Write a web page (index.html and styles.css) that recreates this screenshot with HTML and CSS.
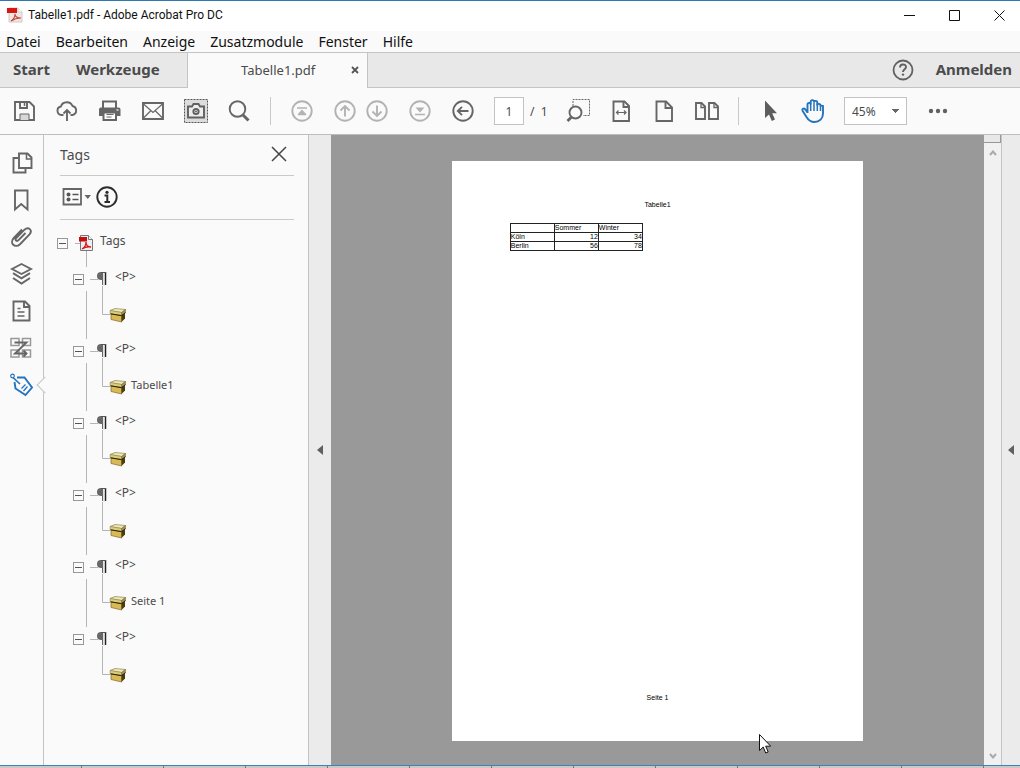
FILE: index.html
```html
<!DOCTYPE html>
<html lang="de">
<head>
<meta charset="utf-8">
<title>Tabelle1.pdf - Adobe Acrobat Pro DC</title>
<link rel="stylesheet" href="styles.css">
</head>
<body>
<svg class="defs" aria-hidden="true">
  <symbol id="pdf" viewBox="0 0 15 16">
    <path d="M1.500 .5h8l4 4v11h-12z" fill="#f1eeee" stroke="#777"/>
    <path d="M9.500 .5v4h4" fill="#fff" stroke="#777"/>
    <path d="M0 2h8v4.500H0z" fill="#c80d10"/>
    <path d="M3 14c2-1 4-4 4-7 0 3 2 5 5 5-3-.5-6 0-9 2z" fill="none" stroke="#d3191b" stroke-width="1.300"/>
  </symbol>
  <symbol id="branch" viewBox="0 0 26 36">
    <path d="M2.500 0v9M2.500 33v3" fill="none" stroke="#b4b4b4"/>
    <use href="#pilcrow" width="26" height="36"/>
  </symbol>
  <symbol id="branch-end" viewBox="0 0 26 36">
    <path d="M2.500 0v9" fill="none" stroke="#b4b4b4"/>
    <use href="#pilcrow" width="26" height="36"/>
  </symbol>
  <symbol id="pilcrow" viewBox="0 0 26 36">
    <path d="M6 21.500h8M18.500 28v8" fill="none" stroke="#b4b4b4"/>
    <path d="M18 14h-1a4 4 0 0 0 0 8h1z" fill="#686868"/>
    <path d="M18.500 14v13" stroke="#666" stroke-width="1"/>
    <path d="M21.500 14v13" stroke="#222" stroke-width="1.500"/>
    <path d="M17 14.500h5" stroke="#555"/>
    <path d="M20 15.500v12" stroke="#ccc"/>
  </symbol>
  <symbol id="box" viewBox="0 0 18 16">
    <path d="M1 3.500L6 1.500l10.500 1-4 3z" fill="#efe8b4" stroke="#8f8350" stroke-width=".7"/>
    <path d="M1 3.500l11.500 2v3L1 6.500z" fill="#d9cd84" stroke="#8a7a3a" stroke-width=".5"/>
    <path d="M12.500 5.500l4-3v3l-4 3z" fill="#a3954f" stroke="#6b5c28" stroke-width=".5"/>
    <path d="M2 7l10.500 1.500v6.500L2 12.500z" fill="#d8b953" stroke="#6e5617" stroke-width=".6"/>
    <path d="M12.500 8.500L16 6v5.500L12.500 15z" fill="#4f3c0e"/>
    <path d="M1.500 6.800l11 1.900 4-3" fill="none" stroke="#2d230a"/>
  </symbol>
  <symbol id="leaf" viewBox="0 0 44 36">
    <path d="M2.500 0v36M18.500 0v20.500H26" fill="none" stroke="#b4b4b4"/>
    <use href="#box" x="25" y="13" width="18" height="16"/>
  </symbol>
  <symbol id="leaf-end" viewBox="0 0 44 36">
    <path d="M18.500 0v20.500H26" fill="none" stroke="#b4b4b4"/>
    <use href="#box" x="25" y="13" width="18" height="16"/>
  </symbol>
</svg>

<header class="titlebar">
  <svg class="app-icon" viewBox="0 0 16 16"><path d="M2 1h9l4 4v10H2z" fill="#eee6e4" stroke="#d3cac8"/><path d="M11 1v4h4" fill="#fff" stroke="#d3cac8"/><path d="M0 1h10v5H0z" fill="#d5170f"/><path d="M4 14c3-2 4-4 4-7 0 3 3 4 6 4-4 0-7 1-10 3z" fill="none" stroke="#c8483f" stroke-width="1.200"/></svg>
  <h1 class="window-title">Tabelle1.pdf - Adobe Acrobat Pro DC</h1>
  <div class="window-controls">
    <button class="window-button" aria-label="Minimieren"><svg viewBox="0 0 11 11"><path d="M0 5.500h11"/></svg></button>
    <button class="window-button" aria-label="Maximieren"><svg viewBox="0 0 11 11"><path d="M.5 .5h10v10H.5z"/></svg></button>
    <button class="window-button" aria-label="Schließen"><svg viewBox="0 0 11 11"><path d="M.5 .5l10 10M10.500 .5l-10 10"/></svg></button>
  </div>
</header>

<nav class="menubar" aria-label="Menü">
  <button class="menu">Datei</button>
  <button class="menu">Bearbeiten</button>
  <button class="menu">Anzeige</button>
  <button class="menu">Zusatzmodule</button>
  <button class="menu">Fenster</button>
  <button class="menu">Hilfe</button>
</nav>

<div class="tabbar">
  <button class="tab-link tab-start">Start</button>
  <button class="tab-link tab-tools">Werkzeuge</button>
  <div class="doc-tab">
    <button class="doc-tab-name">Tabelle1.pdf</button>
    <button class="doc-tab-close" aria-label="Tab schließen"><svg viewBox="0 0 8 8"><path d="M1 1l6 6M7 1L1 7" stroke="#555" stroke-width="1.800"/></svg></button>
  </div>
  <div class="account">
    <button class="icon-button" aria-label="Hilfe"><svg viewBox="0 0 24 24"><circle cx="12" cy="12" r="9.500" fill="none" stroke="#616161" stroke-width="1.800"/><path d="M9 9.500c0-4 6-4 6-.5 0 2.200-3 2.500-3 5" fill="none" stroke="#616161" stroke-width="1.900"/><circle cx="12" cy="16.600" r="1.200" fill="#616161"/></svg></button>
    <button class="tab-link tab-login">Anmelden</button>
  </div>
</div>

<div class="toolbar">
  <button class="icon-button" aria-label="Speichern"><svg viewBox="0 0 24 24" class="line"><path d="M3 3h14.500l4.500 4.500V21H3z"/><path d="M8 3v6h7V3"/><path d="M8 21v-6h9v6" fill="#d8d8d8" stroke-width="1"/><path d="M12.500 4v3" stroke-width="1.500"/></svg></button>
  <button class="icon-button" aria-label="Hochladen"><svg viewBox="0 0 24 24" class="line"><path d="M8.500 16H6.500a4.300 4.300 0 0 1-.6-8.500A6.200 6.200 0 0 1 17.500 7a4.600 4.600 0 0 1 0 9h-2"/><path d="M12 22V11M8.500 14.500L12 11l3.500 3.500"/></svg></button>
  <button class="icon-button" aria-label="Drucken"><svg viewBox="0 0 24 24"><path d="M5 9V2.500h13V9" fill="none" stroke="#666" stroke-width="2"/><path d="M2.500 8.500h18a2 2 0 0 1 2 2V17H1v-6.500a2 2 0 0 1 1.500-2z" fill="#666"/><path d="M5.500 13.500h12.500v7.500H5.500z" fill="#fff" stroke="#666" stroke-width="2"/><path d="M8.500 15.500h7M8.500 18h5" stroke="#666"/><path d="M18.500 11h2" stroke="#fff" stroke-width="1.200"/></svg></button>
  <button class="icon-button" aria-label="E-Mail"><svg viewBox="0 0 24 24" class="line"><path d="M2 4h20v16H2z"/><path d="M2 4.500l10 9 10-9M2 19.500l8-8M22 19.500l-8-8" stroke-width="1.200"/></svg></button>
  <button class="icon-button" aria-label="Schnappschuss"><svg viewBox="0 0 24 24"><path d="M.5 .5h23v23H.5z" fill="#ddd" stroke="#555" stroke-dasharray="2 1"/><path d="M4 7.500h4L9.500 5h5L16 7.500h4v11H4z" fill="#eee" stroke="#616161" stroke-width="1.900"/><circle cx="12" cy="12.500" r="2.600" fill="#fff" stroke="#616161" stroke-width="2"/><circle cx="12" cy="12.500" r="1" fill="#616161"/></svg></button>
  <button class="icon-button" aria-label="Suchen"><svg viewBox="0 0 24 24" class="line"><circle cx="10.500" cy="10" r="7.800"/><path d="M16 16l5.500 5.500" stroke-width="3"/></svg></button>
  <span class="divider"></span>
  <button class="icon-button" aria-label="Erste Seite" disabled><svg viewBox="0 0 24 24" class="line pale"><circle cx="12" cy="12" r="9.700"/><path d="M7 9h10M8 15.500h8" stroke-width="1.500"/><path d="M12 10.500l4.500 5h-9z" class="solid"/></svg></button>
  <button class="icon-button" aria-label="Vorherige Seite" disabled><svg viewBox="0 0 24 24" class="line pale"><circle cx="12" cy="12" r="9.700"/><path d="M12 17.500V7M7.500 11.500L12 7l4.500 4.500"/></svg></button>
  <button class="icon-button next-page" aria-label="Nächste Seite" disabled><svg viewBox="0 0 24 24" class="line pale"><circle cx="12" cy="12" r="9.700"/><path d="M12 6.500V17M7.500 12.500L12 17l4.500-4.500"/></svg></button>
  <button class="icon-button" aria-label="Letzte Seite" disabled><svg viewBox="0 0 24 24" class="line pale"><circle cx="12" cy="12" r="9.700"/><path d="M7 15.500h10" stroke-width="1.500"/><path d="M12 13.500L7.500 8.500h9z" class="solid"/></svg></button>
  <button class="icon-button" aria-label="Vorherige Ansicht"><svg viewBox="0 0 24 24" class="line"><circle cx="12" cy="12" r="9.700"/><path d="M17.500 12H7M11 7.800L6.800 12l4.200 4.200"/></svg></button>
  <input class="page-input" aria-label="Seitenzahl" value="1">
  <span class="page-total">/&nbsp; 1</span>
  <button class="icon-button" aria-label="Auswahlzoom"><svg viewBox="0 0 24 24" class="line"><path d="M7 7V.5h16.500v16H17" stroke-width="1" stroke-dasharray="2 1"/><circle cx="9.500" cy="13.500" r="6"/><path d="M5.500 18L1.500 22" stroke-width="2.800"/></svg></button>
  <button class="icon-button" aria-label="Seitenbreite"><svg viewBox="0 0 24 24" class="line"><path d="M4.500 2.500h11l4.500 4.500v15H4.500z"/><path d="M14.500 3v5H20" /><path d="M8 13.500h9M9.500 11.500l-2 2 2 2M15 11.500l2 2-2 2" stroke-width="1.200"/></svg></button>
  <button class="icon-button" aria-label="Ganze Seite"><svg viewBox="0 0 24 24" class="line"><path d="M4.500 2.500h9.500l6 6V22H4.500z"/><path d="M13.500 3v6H20"/></svg></button>
  <button class="icon-button" aria-label="Doppelseite"><svg viewBox="0 0 24 24" class="line"><path d="M1 4h5.500L10 7.500v12.500H1zM14 4h5.500L23 7.500v12.500h-9z"/><path d="M6 4.500v4h4M19 4.500v4h4" stroke-width="1.300"/></svg></button>
  <span class="divider"></span>
  <button class="icon-button" aria-label="Auswahl"><svg viewBox="0 0 24 24"><path d="M7 1.500v17.500l4-3.500 2.800 6.500 3.200-1.500-2.800-6.200H19z" fill="#5d5d5d"/></svg></button>
  <button class="icon-button" aria-label="Hand"><svg viewBox="0 0 24 24" class="line blue"><path d="M6.500 14V5.500a1.600 1.600 0 0 1 3.200 0V2.800a1.600 1.600 0 0 1 3.300 0v.7a1.600 1.600 0 0 1 3.300 0v3a1.600 1.600 0 0 1 3.200 0L22 7v7.500c0 5-3.500 8.500-8.500 8.500-4 0-6-1.500-8-5L1.700 12c-1-2 1-3.200 2.400-1.800L6.500 13.500"/><path d="M9.700 4.500V12M13 3.500V12M16.300 4.500V12M19.500 7v5" stroke-width="1.500"/></svg></button>
  <select class="zoom" aria-label="Zoom"><option>45%</option></select>
  <button class="icon-button" aria-label="Mehr"><svg viewBox="0 0 24 24"><g fill="#616161"><circle cx="5" cy="12" r="2.200"/><circle cx="12" cy="12" r="2.200"/><circle cx="19" cy="12" r="2.200"/></g></svg></button>
</div>

<div class="workspace">
  <nav class="rail" aria-label="Navigationsfenster">
    <button class="icon-button" aria-label="Seitenminiaturen"><svg viewBox="0 0 24 24" class="line"><path d="M9 2.500h8.500l4 4V17H9z"/><path d="M16.500 3v5h5" stroke-width="1.500"/><path d="M8.500 7H3.500v14.500h12V18"/></svg></button>
    <button class="icon-button" aria-label="Lesezeichen"><svg viewBox="0 0 24 24" class="line"><path d="M5 2.500h12.500v19L11.200 16 5 21.500z"/></svg></button>
    <button class="icon-button" aria-label="Anlagen"><svg viewBox="0 0 24 24" class="line"><path d="M15.500 8l-7 7.200c-1.800 1.800-4-.3-2.300-2.200l8.300-8.300c4-3.700 8.500.5 5 4.700l-9.500 9.800c-5 4.700-11-1.200-6.200-6.200L12 4.500"/></svg></button>
    <button class="icon-button" aria-label="Ebenen"><svg viewBox="0 0 24 24" class="line"><path d="M11.500 2l9.500 5-9.500 5L2 7z"/><path d="M3 11.200l8.500 5.200 8.500-5.200M3 16l8.500 5.500L20 16" stroke-width="2"/></svg></button>
    <button class="icon-button" aria-label="Inhalt"><svg viewBox="0 0 24 24" class="line"><path d="M3.500 2.500H15l4.500 4.500v14.500h-16z"/><path d="M14 3v5h5.500"/><path d="M7.500 9.500h3M7.500 13h7M7.500 17h7" stroke-width="1.500"/></svg></button>
    <button class="icon-button" aria-label="Lesereihenfolge"><svg viewBox="0 0 24 24" class="line"><path d="M1 2.500h8v7H1zM12.500 2.500h8v7h-8zM1 14h8v7H1zM12.500 14h8v7h-8z" stroke="#999" stroke-width="1.500"/><path d="M4.500 6.500h12L5 17.500h11M13.500 14.500l3 3-3 3"/></svg></button>
    <button class="icon-button rail-active" aria-label="Tags"><svg viewBox="0 0 24 24" class="line blue"><path d="M7 4.500h7.500L22 14.500l-6.500 7.500-10-6.500L4.500 9"/><path d="M3 4.500L10 11" stroke-width="1.700"/><circle cx="2.500" cy="3" r="1.800" stroke-width="1.200"/><path d="M11.500 15.500l4-4M13.500 18l4-4.500" stroke-width="1.300"/></svg></button>
  </nav>

  <aside class="panel">
    <div class="panel-head">
      <h2 class="panel-title">Tags</h2>
      <button class="panel-close" aria-label="Schließen"><svg viewBox="0 0 16 16"><path d="M1 1l14 14M15 1L1 15" stroke="#444" stroke-width="1.500"/></svg></button>
    </div>
    <div class="panel-tools">
      <button class="options" aria-label="Optionen"><svg viewBox="0 0 30 20"><path d="M3 2h17.500v15.500H3z" fill="none" stroke="#666" stroke-width="1.800"/><circle cx="8" cy="7.500" r="2" fill="#555"/><circle cx="8" cy="12.500" r="2" fill="#555"/><path d="M12 7.500h6M12 12.500h6" stroke="#555" stroke-width="1.600"/><path d="M24 8h6.500l-3.200 4z" fill="#666"/></svg></button>
      <button class="icon-button" aria-label="Info"><svg viewBox="0 0 24 24"><circle cx="12" cy="12" r="9.700" fill="none" stroke="#2d2d2d" stroke-width="1.900"/><circle cx="12" cy="7.300" r="1.600" fill="#2d2d2d"/><path d="M9.500 10.500h2.800v6.500M9.500 17h5.500" fill="none" stroke="#2d2d2d" stroke-width="2"/></svg></button>
    </div>
    <div class="tree">
      <div class="row"><button class="toggle" aria-label="Tags einklappen"></button><svg class="root-icon" viewBox="0 0 27 36"><path d="M7 21.500h5M18.500 29v7" stroke="#b4b4b4"/><use href="#pdf" x="11" y="13" width="15" height="16"/></svg><span class="label">Tags</span></div>
      <div class="row row-p"><button class="toggle" aria-label="P einklappen"></button><svg class="branch"><use href="#branch"/></svg><span class="label">&lt;P&gt;</span></div>
      <div class="row row-leaf"><svg class="leaf"><use href="#leaf"/></svg></div>
      <div class="row row-p"><button class="toggle" aria-label="P einklappen"></button><svg class="branch"><use href="#branch"/></svg><span class="label">&lt;P&gt;</span></div>
      <div class="row row-leaf"><svg class="leaf"><use href="#leaf"/></svg><span class="label leaf-label">Tabelle1</span></div>
      <div class="row row-p"><button class="toggle" aria-label="P einklappen"></button><svg class="branch"><use href="#branch"/></svg><span class="label">&lt;P&gt;</span></div>
      <div class="row row-leaf"><svg class="leaf"><use href="#leaf"/></svg></div>
      <div class="row row-p"><button class="toggle" aria-label="P einklappen"></button><svg class="branch"><use href="#branch"/></svg><span class="label">&lt;P&gt;</span></div>
      <div class="row row-leaf"><svg class="leaf"><use href="#leaf"/></svg></div>
      <div class="row row-p"><button class="toggle" aria-label="P einklappen"></button><svg class="branch"><use href="#branch"/></svg><span class="label">&lt;P&gt;</span></div>
      <div class="row row-leaf"><svg class="leaf"><use href="#leaf"/></svg><span class="label leaf-label">Seite 1</span></div>
      <div class="row row-p"><button class="toggle" aria-label="P einklappen"></button><svg class="branch"><use href="#branch-end"/></svg><span class="label">&lt;P&gt;</span></div>
      <div class="row row-leaf"><svg class="leaf"><use href="#leaf-end"/></svg></div>
    </div>
  </aside>

  <button class="collapse collapse-left" aria-label="Navigationsfenster ausblenden"><svg viewBox="0 0 6 10"><path d="M6 0v10L0 5z" fill="#606060"/></svg></button>

  <main class="viewer">
    <article class="sheet">
      <p class="sheet-head">Tabelle1</p>
      <table class="grid">
        <tr><td></td><td>Sommer</td><td>Winter</td></tr>
        <tr><td>Köln</td><td class="num">12</td><td class="num">34</td></tr>
        <tr><td>Berlin</td><td class="num">56</td><td class="num">78</td></tr>
      </table>
      <p class="sheet-foot">Seite 1</p>
      <svg class="cursor" viewBox="0 0 12 20"><path d="M.5 .5v16l3.700-3.500 2.500 6 2.500-1-2.500-5.800h5z" fill="#fff" stroke="#111"/></svg>
    </article>
  </main>

  <div class="scrollbar">
    <div class="splitter"></div>
    <button class="scroll-step" aria-label="Nach oben"><svg viewBox="0 0 8 6"><path d="M1 5l3-3.500L7 5"/></svg></button>
    <button class="scroll-step scroll-down" aria-label="Nach unten"><svg viewBox="0 0 8 6"><path d="M1 1l3 3.500L7 1"/></svg></button>
  </div>
  <button class="collapse collapse-right" aria-label="Werkzeuge einblenden"><svg viewBox="0 0 6 10"><path d="M6 0v10L0 5z" fill="#606060"/></svg></button>
</div>
<div class="desktop-edge"></div>
</body>
</html>
```
FILE: styles.css
```css
* { box-sizing: border-box; }
body {
  margin: 0;
  min-height: 100vh;
  display: flex;
  flex-direction: column;
  background: #fafafa;
  color: #4b4b4b;
  font-family: "Noto Sans", "Open Sans", sans-serif;
  font-size: 12px;
  border-top: 1px solid #2f77b0;
}
h1, h2, p { margin: 0; font-weight: 400; }
button {
  padding: 0;
  border: 0;
  background: none;
  color: inherit;
  font: inherit;
  white-space: nowrap;
}
svg { display: block; flex: none; }
.defs { position: absolute; width: 0; height: 0; }

.titlebar {
  display: flex;
  align-items: center;
  height: 30px;
  padding: 0 0 2px 7px;
  gap: 5px;
  background: #fff;
  color: #111;
}
.app-icon { width: 16px; height: 16px; }
.window-title { font-family: Roboto, "Noto Sans", sans-serif; font-size: 12px; }
.window-controls { display: flex; margin-left: auto; }
.window-button { display: grid; place-items: center; width: 45px; height: 28px; }
.window-button:last-child { margin-right: -2px; }
.window-button svg { width: 11px; height: 11px; fill: none; stroke: #111; }

.menubar {
  display: flex;
  height: 21px;
  padding-left: 6px;
  gap: 15px;
  color: #111;
  font-size: 14px;
  line-height: 21px;
}

.tabbar {
  display: flex;
  height: 36px;
  background: #e8e8e8;
  border-top: 1px solid #c4c4c4;
  border-bottom: 1px solid #c4c4c4;
}
.tab-link { padding-bottom: 2px; font-size: 15px; font-weight: 700; }
.tab-start { margin-left: 13px; }
.tab-tools { margin: 0 27px 0 26px; }
.doc-tab {
  display: flex;
  align-items: center;
  width: 181px;
  margin-bottom: -1px;
  padding-bottom: 2px;
  border: solid #c4c4c4;
  border-width: 0 1px;
  background: #fafafa;
}
.doc-tab-name { flex: 1; padding-left: 26px; font-size: 13px; }
.doc-tab-close { padding: 8px; }
.doc-tab-close svg { width: 8px; height: 8px; }
.account { display: flex; align-items: center; margin-left: auto; padding-right: 8px; gap: 21px; }

.icon-button { flex: none; width: 24px; height: 24px; }
.icon-button svg { width: 24px; height: 24px; }
.line { fill: none; stroke: #666; stroke-width: 1.9; }
.pale { stroke: #b3b3b3; }
.blue { stroke: #2473bd; }
.pale .solid { fill: #b3b3b3; stroke: none; }

.toolbar {
  display: flex;
  align-items: center;
  height: 47px;
  padding: 0 12px;
  gap: 19px;
  border-bottom: 1px solid #bdbdbd;
}
.divider { width: 1px; height: 28px; background: #c9c9c9; }
.next-page { margin-left: -11px; }
.page-input {
  width: 30px;
  height: 28px;
  padding: 0;
  border: 1px solid #c3c3c3;
  background: #fff;
  color: inherit;
  font: inherit;
  text-align: center;
}
.page-total { width: 17px; margin-left: -13px; white-space: nowrap; }
.zoom {
  width: 63px;
  height: 28px;
  padding: 0 7px;
  appearance: none;
  border: 1px solid #c3c3c3;
  border-radius: 0;
  color: inherit;
  font: inherit;
  background: #fff conic-gradient(from -45deg at 50% 100%, #666 0 90deg, transparent 0) no-repeat right 7px center / 8px 4px;
}

.workspace { display: flex; flex: 1; }
.rail {
  display: flex;
  flex-direction: column;
  width: 44px;
  padding: 16px 0 0 10px;
  gap: 13px;
  border-right: 1px solid #c4c4c4;
}
.rail-active { position: relative; }
.rail-active::after {
  content: "";
  position: absolute;
  top: 6px;
  left: 29px;
  width: 11px;
  height: 11px;
  border: solid #c4c4c4;
  border-width: 0 0 1px 1px;
  background: #fafafa;
  transform: rotate(45deg);
}

.panel { width: 264px; padding: 0 14px 0 16px; }
.panel-head, .panel-tools {
  display: flex;
  align-items: center;
  border-bottom: 1px solid #c9c9c9;
}
.panel-head { justify-content: space-between; height: 41px; padding: 0 7px 2px 0; }
.panel-title { font-size: 14px; }
.panel-close svg { width: 16px; height: 16px; }
.panel-tools { height: 44px; padding-bottom: 1px; gap: 4px; }
.options svg { width: 31px; height: 20px; }
.tree { margin: 2px 0 0 -3px; }
.row { display: flex; align-items: center; height: 36px; }
.row-p { padding-left: 16px; }
.row-leaf { padding-left: 27px; }
.toggle {
  width: 11px;
  height: 11px;
  margin-top: 6px;
  border: 1px solid #989898;
  background: linear-gradient(#555, #555) no-repeat center / 7px 1px;
}
.root-icon { width: 27px; height: 36px; }
.branch { width: 26px; height: 36px; }
.leaf { width: 44px; height: 36px; }
.label { margin-left: 5px; font-size: 12px; }
.leaf-label { margin-left: 3px; font-size: 11px; }

.collapse { display: grid; place-items: center; background: #ebebeb; }
.collapse svg { width: 6px; height: 10px; }
.collapse-left { width: 23px; border-left: 1px solid #c4c4c4; }
.collapse-right { width: 19px; border-left: 1px solid #c4c4c4; }

.viewer { flex: 1; display: flex; justify-content: center; align-items: flex-start; padding-top: 26px; background: #999; }
.sheet {
  position: relative;
  display: flex;
  flex-direction: column;
  width: 63%;
  aspect-ratio: 411 / 579;
  padding: 39px 58px;
  background: #fff;
  color: #000;
  font: 7px/9px "Liberation Sans", Arial, sans-serif;
}
.sheet-head, .sheet-foot { text-align: center; }
.sheet-foot { margin-top: auto; }
.grid { width: 133px; margin-top: 14px; table-layout: fixed; border-collapse: collapse; }
.grid td { height: 9px; padding: 0; border: 1px solid #222; line-height: 8px; }
.grid .num { text-align: right; }
.cursor { position: absolute; right: 92px; bottom: -13px; width: 12px; height: 20px; }

.scrollbar { display: flex; flex-direction: column; width: 17px; background: #f1f1f1; }
.splitter { height: 8px; border: 1px solid #999; border-width: 0 1px 1px 0; background: #e8e8e8; }
.scroll-step { display: grid; place-items: center; height: 19px; }
.scroll-step svg { width: 8px; height: 6px; fill: none; stroke: #aaa; stroke-width: 2; }
.scroll-down { margin-top: auto; }

.desktop-edge {
  height: 3px;
  border-top: 1px solid #4182b3;
  background: repeating-linear-gradient(90deg, #c9c9c9 0 81px, #777 81px 82px);
}
```
